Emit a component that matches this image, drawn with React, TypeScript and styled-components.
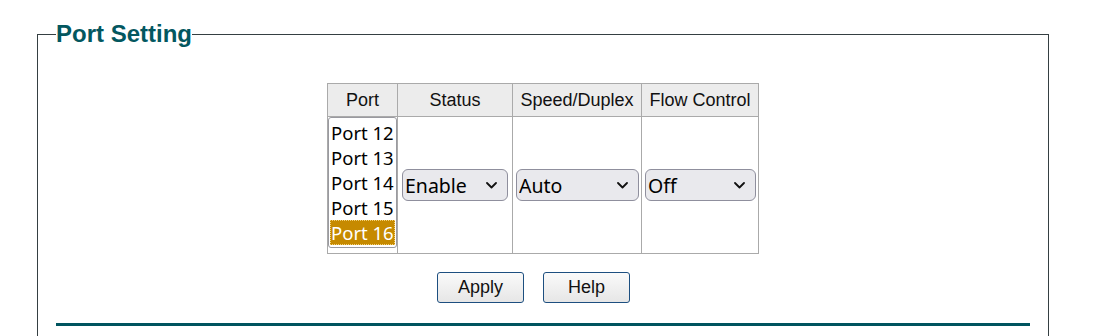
import styled, { createGlobalStyle } from 'styled-components';

const GlobalStyle = createGlobalStyle`
  html, body {
    margin: 0;
    padding: 0;
    background: #ffffff;
  }
  body {
    font-family: "Liberation Sans", Arial, sans-serif;
  }
`;

const ports = ['Port 12', 'Port 13', 'Port 14', 'Port 15', 'Port 16'];

const Chevron = () => (
  <ChevronIcon width="11" height="7" viewBox="0 0 11 7">
    <path d="M1 1 L5.5 5.5 L10 1" fill="none" stroke="#111" strokeWidth="1.8" strokeLinecap="round" strokeLinejoin="round" />
  </ChevronIcon>
);

export default function App() {
  return (
    <Page>
      <GlobalStyle />
      <Fieldset>
        <Legend>Port Setting</Legend>
        <SettingTable>
          <colgroup>
            <col style={{ width: 70 }} />
            <col style={{ width: 115 }} />
            <col style={{ width: 129 }} />
            <col style={{ width: 117 }} />
          </colgroup>
          <thead>
            <tr>
              <HeadCell>Port</HeadCell>
              <HeadCell>Status</HeadCell>
              <HeadCell>Speed/Duplex</HeadCell>
              <HeadCell>Flow Control</HeadCell>
            </tr>
          </thead>
          <tbody>
            <tr>
              <PortCell>
                <ListBox>
                  {ports.map((p, i) => (
                    <ListItem key={p} $selected={i === ports.length - 1}>
                      {p}
                    </ListItem>
                  ))}
                </ListBox>
              </PortCell>
              <BodyCell>
                <SelectWrap $width={106}>
                  <Dropdown defaultValue="Enable">
                    <option>Enable</option>
                    <option>Disable</option>
                  </Dropdown>
                  <Chevron />
                </SelectWrap>
              </BodyCell>
              <BodyCell>
                <SelectWrap $width={123}>
                  <Dropdown defaultValue="Auto">
                    <option>Auto</option>
                    <option>10MH</option>
                    <option>10MF</option>
                    <option>100MH</option>
                    <option>100MF</option>
                  </Dropdown>
                  <Chevron />
                </SelectWrap>
              </BodyCell>
              <BodyCell>
                <SelectWrap $width={111}>
                  <Dropdown defaultValue="Off">
                    <option>Off</option>
                    <option>On</option>
                  </Dropdown>
                  <Chevron />
                </SelectWrap>
              </BodyCell>
            </tr>
          </tbody>
        </SettingTable>
        <ButtonRow>
          <ActionButton>Apply</ActionButton>
          <ActionButton>Help</ActionButton>
        </ButtonRow>
        <Rule />
      </Fieldset>
    </Page>
  );
}

const Page = styled.div`
  padding: 20px 48px 0 37px;
  height: 336px;
  box-sizing: border-box;
  overflow: hidden;
`;

const Fieldset = styled.fieldset`
  margin: 0;
  border: 1px solid #353f42;
  padding: 0 18px 40px 18px;
  min-inline-size: 0;
`;

const Legend = styled.legend`
  padding: 0;
  font-size: 24px;
  font-weight: bold;
  color: #03575f;
  line-height: 28px;
`;

const SettingTable = styled.table`
  margin: 35px auto 0;
  border-collapse: collapse;
  table-layout: fixed;
  width: 431px;
`;

const HeadCell = styled.th`
  background: #ececec;
  border: 1px solid #aaaaaa;
  font-weight: normal;
  font-size: 18px;
  color: #111;
  height: 32px;
  padding: 0;
  text-align: center;
  white-space: nowrap;
`;

const BodyCell = styled.td`
  border: 1px solid #aaaaaa;
  padding: 0 3px;
  text-align: center;
  vertical-align: middle;
  height: 130px;
`;

const PortCell = styled(BodyCell)`
  padding: 0 0 5px 0;
  vertical-align: top;
`;

const ListBox = styled.div`
  border: 1px solid #9a9aa0;
  border-radius: 3px;
  padding: 2px 1px;
  text-align: left;
  font-family: "Noto Sans", sans-serif;
  font-size: 18.5px;
  line-height: 25px;
`;

const ListItem = styled.div<{ $selected?: boolean }>`
  padding: 0 1px;
  color: ${(p) => (p.$selected ? '#ffffff' : '#000000')};
  background: ${(p) => (p.$selected ? '#c68a00' : 'transparent')};
  outline: ${(p) => (p.$selected ? '1px dotted #f3d27a' : 'none')};
  outline-offset: -1px;
  white-space: nowrap;
`;

const SelectWrap = styled.span<{ $width: number }>`
  position: relative;
  display: inline-block;
  width: ${(p) => p.$width}px;
  height: 32px;
  vertical-align: middle;
`;

const Dropdown = styled.select`
  appearance: none;
  width: 100%;
  height: 100%;
  box-sizing: border-box;
  font-family: "Noto Sans", sans-serif;
  font-size: 19.5px;
  color: #000;
  background-color: #e9e9ed;
  border: 1px solid #8f8f9d;
  border-radius: 6px;
  padding: 0 0 0 2px;
  margin: 0;
`;

const ChevronIcon = styled.svg`
  position: absolute;
  right: 11px;
  top: 13px;
  pointer-events: none;
`;

const ButtonRow = styled.div`
  display: flex;
  justify-content: center;
  gap: 19px;
  padding-right: 19px;
  margin-top: 18px;
`;

const ActionButton = styled.button`
  width: 87px;
  height: 31px;
  font-family: "Liberation Sans", Arial, sans-serif;
  font-size: 18px;
  color: #111;
  background: linear-gradient(#fafafa, #e6e6e6);
  border: 1px solid #1d4f80;
  border-radius: 3px;
  padding: 0;
`;

const Rule = styled.div`
  margin-top: 20px;
  height: 3px;
  background: #00545f;
`;
